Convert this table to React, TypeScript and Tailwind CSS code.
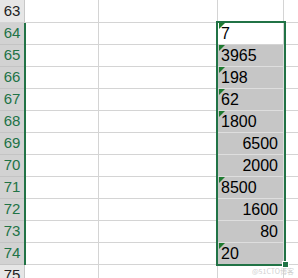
const rows = [
  { n: 64, v: "7", left: true, flag: true },
  { n: 65, v: "3965", left: true, flag: true },
  { n: 66, v: "198", left: true, flag: true },
  { n: 67, v: "62", left: true, flag: true },
  { n: 68, v: "1800", left: true, flag: true },
  { n: 69, v: "6500", left: false, flag: false },
  { n: 70, v: "2000", left: false, flag: false },
  { n: 71, v: "8500", left: true, flag: true },
  { n: 72, v: "1600", left: false, flag: false },
  { n: 73, v: "80", left: false, flag: false },
  { n: 74, v: "20", left: true, flag: true },
];

const Flag = () => (
  <div className="absolute left-[1px] top-0 w-0 h-0 border-t-[6px] border-t-[#1e7a30] border-r-[6px] border-r-transparent" />
);

const App = () => {
  return (
    <div className="relative w-[298px] h-[278px] overflow-hidden bg-white font-['Liberation_Sans',Arial,sans-serif]">
      {/* row 63 */}
      <div className="flex h-[23px] border-b border-[#d4d4d4]">
        <div className="w-[25px] shrink-0 bg-[#e6e6e6] border-r border-[#c8c8c8] flex items-center justify-center text-[15px] text-[#222]">
          63
        </div>
        <div className="w-[74px] shrink-0 border-r border-[#d4d4d4]" />
        <div className="w-[119px] shrink-0 border-r border-[#d4d4d4]" />
        <div className="w-[66px] shrink-0 border-r border-[#d4d4d4]" />
        <div className="flex-1" />
      </div>

      {rows.map((r, i) => (
        <div key={r.n} className="flex h-[22px]">
          <div className="w-[24px] shrink-0 bg-[#d2d2d2] border-b border-[#c4c4c4] flex items-center justify-center text-[15px] text-[#217346]">
            {r.n}
          </div>
          <div className="w-[2px] shrink-0 bg-[#217346]" />
          <div className="w-[73px] shrink-0 border-r border-b border-[#d4d4d4]" />
          <div className="w-[119px] shrink-0 border-r border-b border-[#d4d4d4]" />
          <div
            className={
              i === 0
                ? "relative w-[66px] shrink-0 border-r border-b border-[#d4d4d4] bg-white flex items-center text-[16px] text-black px-[3px]"
                : "relative w-[66px] shrink-0 border-r border-b border-[#dedede] bg-[#c6c6c6] flex items-center text-[16px] text-black px-[3px]"
            }
          >
            {r.flag && <Flag />}
            <span className={r.left ? "mr-auto" : "ml-auto mr-[2px]"}>{r.v}</span>
          </div>
          <div className="flex-1 border-b border-[#d4d4d4]" />
        </div>
      ))}

      {/* row 75 */}
      <div className="flex h-[14px]">
        <div className="w-[25px] shrink-0 bg-[#e6e6e6] border-r border-[#c8c8c8] flex justify-center pt-[2px] text-[15px] leading-[16px] text-[#222]">
          75
        </div>
        <div className="w-[74px] shrink-0 border-r border-[#d4d4d4]" />
        <div className="w-[119px] shrink-0 border-r border-[#d4d4d4]" />
        <div className="w-[66px] shrink-0 border-r border-[#d4d4d4]" />
        <div className="flex-1" />
      </div>

      {/* selection outline */}
      <div className="absolute left-[216px] top-[21px] w-[70px] h-[245px] border-2 border-[#217346] pointer-events-none" />
      <div className="absolute left-[282px] top-[261px] w-[7px] h-[7px] bg-[#217346] border border-white" />

      <div className="absolute left-[252px] top-[267px] text-[7px] leading-[8px] text-[#d0d0d0] font-['Noto_Sans_CJK_SC',sans-serif]">
        @51CTO博客
      </div>
    </div>
  );
};

export default App;
